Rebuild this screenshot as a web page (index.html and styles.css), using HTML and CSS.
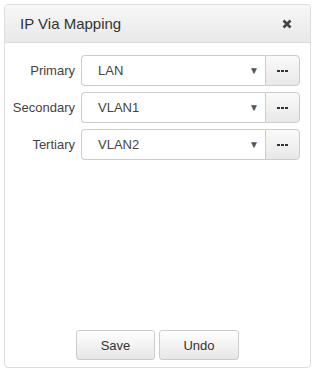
FILE: index.html
```html
<!DOCTYPE html>
<html lang="en">
  <head>
    <meta charset="UTF-8" />
    <meta name="viewport" content="width=device-width, initial-scale=1.0" />
    <title>IP Via Mapping</title>
    <link rel="stylesheet" href="styles.css">
  </head>
  <body>
    <div class="panel">
      <div class="panel-header">
        <span class="panel-title">IP Via Mapping</span>
        <span class="close-btn">
          <svg width="10" height="10" viewBox="0 0 10 10">
            <path d="M1.5 1.5 L8.5 8.5 M8.5 1.5 L1.5 8.5" stroke="#444" stroke-width="2.6" />
          </svg>
        </span>
      </div>

      <div class="panel-body">
        <div class="form-row">
          <label class="row-label">Primary</label>
          <div class="select-box">
            <span class="select-value">LAN</span>
            <span class="select-arrow">&#9660;</span>
          </div>
          <span class="more-btn">
            <svg width="11" height="2" viewBox="0 0 11 2">
              <rect x="0" y="0" width="3" height="2" fill="#333" />
              <rect x="4" y="0" width="3" height="2" fill="#333" />
              <rect x="8" y="0" width="3" height="2" fill="#333" />
            </svg>
          </span>
        </div>
        <div class="form-row">
          <label class="row-label">Secondary</label>
          <div class="select-box">
            <span class="select-value">VLAN1</span>
            <span class="select-arrow">&#9660;</span>
          </div>
          <span class="more-btn">
            <svg width="11" height="2" viewBox="0 0 11 2">
              <rect x="0" y="0" width="3" height="2" fill="#333" />
              <rect x="4" y="0" width="3" height="2" fill="#333" />
              <rect x="8" y="0" width="3" height="2" fill="#333" />
            </svg>
          </span>
        </div>
        <div class="form-row">
          <label class="row-label">Tertiary</label>
          <div class="select-box">
            <span class="select-value">VLAN2</span>
            <span class="select-arrow">&#9660;</span>
          </div>
          <span class="more-btn">
            <svg width="11" height="2" viewBox="0 0 11 2">
              <rect x="0" y="0" width="3" height="2" fill="#333" />
              <rect x="4" y="0" width="3" height="2" fill="#333" />
              <rect x="8" y="0" width="3" height="2" fill="#333" />
            </svg>
          </span>
        </div>
      </div>

      <div class="panel-footer">
        <button class="btn btn-save">Save</button>
        <button class="btn btn-undo">Undo</button>
      </div>
    </div>
  </body>
</html>
```

FILE: styles.css
```css
body {
  margin: 0;
  font-family: "Liberation Sans", Arial, sans-serif;
  font-size: 13px;
  color: #333;
  background-color: white;
}

.panel {
  box-sizing: border-box;
  margin: 4px;
  width: 307px;
  height: 364px;
  border: 1px solid #ddd;
  border-radius: 4px;
  display: flex;
  flex-direction: column;
  background-color: white;
}

.panel-header {
  box-sizing: border-box;
  height: 38px;
  padding: 0 18px 0 15px;
  display: flex;
  align-items: center;
  justify-content: space-between;
  border-bottom: 1px solid #ddd;
  border-radius: 4px 4px 0 0;
  background: linear-gradient(to bottom, #f7f7f7, #e9e9e9);
}

.panel-title {
  font-size: 15px;
  color: #333;
}

.close-btn {
  display: flex;
  align-items: center;
}

.panel-body {
  flex: 1;
  padding: 12px 10px 0 0;
  display: flex;
  flex-direction: column;
  gap: 6px;
}

.form-row {
  display: flex;
  align-items: center;
  height: 31px;
}

.row-label {
  width: 70px;
  margin-right: 6px;
  text-align: right;
  color: #444;
}

.select-box {
  box-sizing: border-box;
  flex: 1;
  height: 31px;
  display: flex;
  align-items: center;
  justify-content: space-between;
  padding: 0 6px 0 16px;
  border: 1px solid #ccc;
  border-right: none;
  border-radius: 4px 0 0 4px;
  background-color: white;
}

.select-value {
  color: #444;
}

.select-arrow {
  font-size: 10px;
  color: #555;
}

.more-btn {
  box-sizing: border-box;
  width: 35px;
  height: 31px;
  display: flex;
  align-items: center;
  justify-content: center;
  border: 1px solid #ccc;
  border-radius: 0 4px 4px 0;
  background: linear-gradient(to bottom, #fafafa, #e8e8e8);
}

.panel-footer {
  display: flex;
  justify-content: center;
  gap: 4px;
  padding: 0 0 7px 0;
}

.btn {
  box-sizing: border-box;
  height: 30px;
  border: 1px solid #ccc;
  border-radius: 3px;
  background: linear-gradient(to bottom, #ffffff, #e6e6e6);
  font-family: "Liberation Sans", Arial, sans-serif;
  font-size: 13px;
  color: #333;
}

.btn-save {
  width: 79px;
}

.btn-undo {
  width: 80px;
}
```
